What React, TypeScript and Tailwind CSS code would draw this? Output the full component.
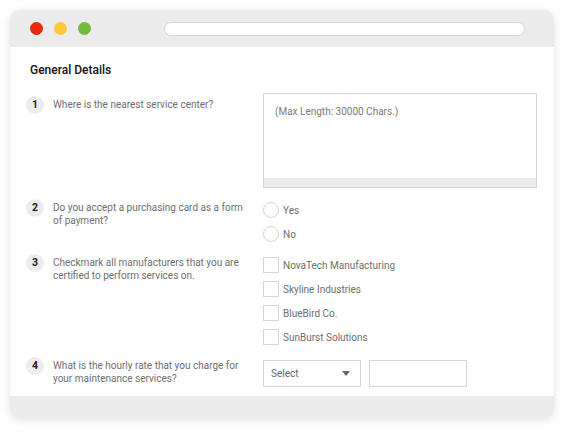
import React from "react";

const Badge = ({ n }: { n: number }) => (
  <div className="w-[18px] h-[18px] rounded-full bg-[#ececec] flex items-center justify-center text-[10.5px] font-bold text-[#222] shrink-0">
    {n}
  </div>
);

const Question = ({ n, text, mt }: { n: number; text: React.ReactNode; mt: string }) => (
  <div className={`flex items-start w-[237px] shrink-0 ${mt}`}>
    <Badge n={n} />
    <div className="ml-[9px] mt-[2px] text-[10px] leading-[13px] text-[#6e6e6e] w-[190px]">{text}</div>
  </div>
);

const Radio = ({ label }: { label: string }) => (
  <div className="flex items-center h-[16px]">
    <div className="w-[16px] h-[16px] rounded-full border border-[#d4d4d4] bg-white" />
    <span className="ml-[4px] text-[10px] text-[#6e6e6e]">{label}</span>
  </div>
);

const Check = ({ label }: { label: string }) => (
  <div className="flex items-center h-[16px]">
    <div className="w-[16px] h-[16px] border border-[#d4d4d4] bg-white" />
    <span className="ml-[4px] text-[10px] text-[#6e6e6e]">{label}</span>
  </div>
);

export default function App() {
  return (
    <div className="w-[568px] h-[432px] bg-white pt-[10px] pl-[10px]" style={{ fontFamily: "Roboto, 'Liberation Sans', sans-serif" }}>
      <div className="w-[544px] rounded-[10px] overflow-hidden shadow-[0_2px_8px_rgba(0,0,0,0.12)] bg-[#ebebeb]">
        <div className="h-[37px] flex items-center pl-[20px]">
          <div className="w-[13px] h-[13px] rounded-full bg-[#e42a08]" />
          <div className="w-[13px] h-[13px] rounded-full bg-[#fec73a] ml-[11px]" />
          <div className="w-[13px] h-[13px] rounded-full bg-[#73bb3e] ml-[11px]" />
          <div className="ml-[73px] w-[361px] h-[14px] rounded-full bg-white border border-[#d6d6d6]" />
        </div>
        <div className="bg-white h-[349px] pt-[15px]">
          <div className="pl-[20px] text-[12px] leading-[16px] font-medium text-[#111]">General Details</div>
          <div className="pl-[16px] mt-[15px] flex flex-col">
            <div className="flex items-start">
              <Question n={1} text="Where is the nearest service center?" mt="mt-[3px]" />
              <div className="w-[274px] h-[95px] border border-[#d4d4d4] flex flex-col">
                <div className="flex-1 px-[11px] pt-[10px] text-[10px] text-[#7a7a7a]">(Max Length: 30000 Chars.)</div>
                <div className="h-[9px] bg-[#ebebeb]" />
              </div>
            </div>
            <div className="flex items-start mt-[14px]">
              <Question n={2} text="Do you accept a purchasing card as a form of payment?" mt="-mt-[3px]" />
              <div className="flex flex-col gap-[8px]">
                <Radio label="Yes" />
                <Radio label="No" />
              </div>
            </div>
            <div className="flex items-start mt-[15px]">
              <Question n={3} text="Checkmark all manufacturers that you are certified to perform services on." mt="-mt-[3px]" />
              <div className="flex flex-col gap-[8px]">
                <Check label="NovaTech Manufacturing" />
                <Check label="Skyline Industries" />
                <Check label="BlueBird Co." />
                <Check label="SunBurst Solutions" />
              </div>
            </div>
            <div className="flex items-start mt-[15px]">
              <Question n={4} text="What is the hourly rate that you charge for your maintenance services?" mt="-mt-[3px]" />
              <div className="flex items-center gap-[8px]">
                <div className="w-[98px] h-[27px] border border-[#d4d4d4] flex items-center justify-between pl-[7px] pr-[10px]">
                  <span className="text-[10px] text-[#666]">Select</span>
                  <svg width="8" height="5" viewBox="0 0 8 5"><path d="M0 0 L8 0 L4 5 Z" fill="#666" /></svg>
                </div>
                <div className="w-[98px] h-[27px] border border-[#d4d4d4]" />
              </div>
            </div>
          </div>
        </div>
        <div className="h-[22px]" />
      </div>
    </div>
  );
}
